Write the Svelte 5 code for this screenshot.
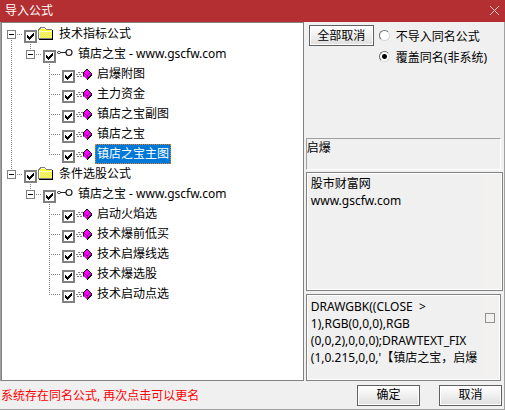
<script>
	let tree = $state([
		{
			name: '技术指标公式',
			open: true,
			checked: true,
			children: [
				{
					name: '镇店之宝 - www.gscfw.com',
					open: true,
					checked: true,
					children: [
						{ name: '启爆附图', checked: true },
						{ name: '主力资金', checked: true },
						{ name: '镇店之宝副图', checked: true },
						{ name: '镇店之宝', checked: true },
						{ name: '镇店之宝主图', checked: true }
					]
				}
			]
		},
		{
			name: '条件选股公式',
			open: true,
			checked: true,
			children: [
				{
					name: '镇店之宝 - www.gscfw.com',
					open: true,
					checked: true,
					children: [
						{ name: '启动火焰选', checked: true },
						{ name: '技术爆前低买', checked: true },
						{ name: '技术启爆线选', checked: true },
						{ name: '技术爆选股', checked: true },
						{ name: '技术启动点选', checked: true }
					]
				}
			]
		}
	]);

	let selected = $state('镇店之宝主图');
	let mode = $state('overwrite');

	const author = '股市财富网\nwww.gscfw.com';
	const source =
		"DRAWGBK((CLOSE  >\n1),RGB(0,0,0),RGB\n(0,0,2),0,0,0);DRAWTEXT_FIX\n(1,0.215,0,0,'【镇店之宝，启爆";

	function setAll(nodes, value) {
		for (const node of nodes) {
			node.checked = value;
			if (node.children) setAll(node.children, value);
		}
	}
</script>

{#snippet icon(level)}
	<svg width="16" height="16" viewBox="0 0 16 16" shape-rendering="crispEdges" aria-hidden="true">
		{#if level === 0}
			<path d="M0 13V3h1V2h1V1h5v1h1v1h6v10z" fill="#808080" />
			<path d="M1 12V4h1V3h1V2h4v1h1v1h6v8z" fill="#ffff38" />
			<path
				d="M2 6.5h12M1 7.5h12M2 8.5h12M1 9.5h12M2 10.5h12M1 11.5h12"
				stroke="#e4e48c"
				stroke-dasharray="1 1"
			/>
			<path d="M3 2.5h4M1.5 4v8M2 5.5h12" stroke="#ffffc8" />
			<path d="M14.5 4v10M1 13.5h14" stroke="#000" />
		{:else if level === 1}
			<g shape-rendering="auto">
				<path d="M3 6.5h7" stroke="#202020" />
				<rect x="0.5" y="5.5" width="3" height="2" rx="1" fill="#fff" stroke="#202020" />
				<circle cx="12" cy="6.5" r="3" fill="#fff" stroke="#202020" stroke-width="1.2" />
			</g>
		{:else}
			<path d="M2 6.5h5M0 8.5h6M1 10.5h7" stroke="#808080" stroke-dasharray="2 1" />
			<path
				d="M10 3h2v1h1v1h1v1h1v1h1v3h-1v1h-1v1h-1v1h-1v1h-1v-1h-1v-1H9v-1H8v-1H7V6h1V5h1V4h1z"
				fill="#000"
			/>
			<path
				d="M10 4h2v1h1v1h1v1h1v2h-1v1h-1v1h-1v1h-1v1h-1v-1H9v-1H8V6h1V5h1z"
				fill="#f0f"
			/>
			<path d="M8 7.5h1M9 8.5h1M10 9.5h2M12 8.5h1M13 7.5h1M11.5 10v3" stroke="#900090" />
		{/if}
	</svg>
{/snippet}

{#snippet branch(nodes, level)}
	<ul>
		{#each nodes as node}
			<li class:root={level === 0}>
				<div class="row">
					<span class="stub">
						{#if node.children}
							<button
								type="button"
								class="expander"
								aria-label={node.name}
								aria-expanded={node.open}
								onclick={() => (node.open = !node.open)}
							>
								<svg width="7" height="7" viewBox="0 0 7 7" shape-rendering="crispEdges">
									<path d={node.open ? 'M1 3.5h5' : 'M1 3.5h5M3.5 1v5'} stroke="#000" />
								</svg>
							</button>
						{/if}
					</span>
					<input type="checkbox" aria-label={node.name} bind:checked={node.checked} />
					<button
						type="button"
						class="item"
						class:selected={selected === node.name}
						onclick={() => (selected = node.name)}
					>
						{@render icon(level)}
						<span class="name">{node.name}</span>
					</button>
				</div>
				{#if node.children && node.open}
					{@render branch(node.children, level + 1)}
				{/if}
			</li>
		{/each}
	</ul>
{/snippet}

<div class="dialog">
	<header>
		<h1>导入公式</h1>
		<button type="button" class="close" aria-label="关闭">
			<svg width="11" height="11" viewBox="0 0 11 11">
				<path d="M1 1l9 9M10 1l-9 9" stroke="#f0c8c8" fill="none" />
			</svg>
		</button>
	</header>

	<main>
		<div class="tree">
			{@render branch(tree, 0)}
		</div>

		<div class="side">
			<div class="options">
				<button type="button" class="btn" onclick={() => setAll(tree, false)}>全部取消</button>
				<div class="radios">
					<label><input type="radio" name="mode" value="skip" bind:group={mode} />不导入同名公式</label>
					<label>
						<input type="radio" name="mode" value="overwrite" bind:group={mode} />覆盖同名(非系统)
					</label>
				</div>
			</div>
			<div class="desc">启爆</div>
			<textarea class="author" readonly aria-label="作者" value={author}></textarea>
			<div class="source">
				<textarea readonly aria-label="公式源码" value={source}></textarea>
				<div class="track"><span class="thumb"></span></div>
			</div>
		</div>
	</main>

	<footer>
		<p>系统存在同名公式, 再次点击可以更名</p>
		<button type="button" class="btn">确定</button>
		<button type="button" class="btn">取消</button>
	</footer>
</div>

<style>
	:global(body) {
		margin: 0;
	}

	.dialog,
	.dialog button,
	.dialog textarea {
		font-family: 'Noto Sans', 'Noto Sans CJK SC', sans-serif;
		font-size: 12px;
		color: #000;
	}

	.dialog {
		display: flex;
		flex-direction: column;
		min-height: 100vh;
		box-sizing: border-box;
		background: #f0f0f0;
		border-bottom: 1px solid #a0a0a0;
	}

	header {
		display: flex;
		justify-content: space-between;
		align-items: center;
		height: 22px;
		padding: 0 5px;
		background: #b42f32;
	}

	h1 {
		margin: 0;
		font-size: 12px;
		font-weight: 400;
		line-height: 20px;
		color: #fff;
	}

	.close {
		display: flex;
		padding: 0 0 2px;
		border: none;
		background: none;
	}

	main {
		flex: 1;
		display: flex;
		border-left: 1px solid #a0a0a0;
		border-right: 1px solid #a0a0a0;
	}

	.tree {
		flex: 3;
		box-sizing: border-box;
		padding: 1px 0 0 5px;
		background: #fff;
		border: 1px solid #828282;
	}

	ul {
		list-style: none;
		margin: 0;
		padding: 0;
	}

	ul ul {
		padding-left: 19px;
	}

	li {
		background: repeating-linear-gradient(#808080 0 1px, transparent 1px 2px) 4px 0 / 1px 100% no-repeat;
	}

	li:last-child {
		background-size: 1px 11px;
	}

	li.root:first-child {
		background-position: 4px 10px;
	}

	.row {
		display: flex;
		align-items: center;
		height: 20px;
	}

	.stub {
		display: flex;
		align-items: center;
		width: 17px;
		height: 20px;
		background: repeating-linear-gradient(90deg, #808080 0 1px, transparent 1px 2px) 4px 10px / 11px 1px
			no-repeat;
	}

	.expander {
		display: flex;
		padding: 0;
		border: 1px solid #808080;
		background: #fff;
	}

	input {
		appearance: none;
		margin: 0;
		background: #fff;
	}

	input[type='checkbox'] {
		align-self: flex-end;
		width: 13px;
		height: 13px;
		margin-bottom: 1px;
		border: 2px solid #808080;
	}

	input[type='checkbox']:checked {
		background: #fff
			url("data:image/svg+xml,%3Csvg xmlns='http://www.w3.org/2000/svg' viewBox='0 0 9 9' shape-rendering='crispEdges'%3E%3Cpath d='M1 3h1v1h1v1h1V4h1V3h1V2h1V1h1v3H7v1H6v1H5v1H4v1H3V7H2V6H1z'/%3E%3C/svg%3E");
	}

	.item {
		display: flex;
		align-items: center;
		gap: 3px;
		padding: 0 0 0 1px;
		border: none;
		background: none;
		white-space: nowrap;
	}

	.name {
		height: 18px;
		padding: 0 1px;
		border: 1px solid transparent;
		line-height: 17px;
	}

	.selected .name {
		background: #0078d7;
		border: 1px dotted #e08030;
		color: #fff;
	}

	.side {
		flex: 2;
		display: flex;
		flex-direction: column;
		box-sizing: border-box;
		min-width: 0;
		padding: 3px 1px 0 2px;
	}

	.options {
		flex: 1;
		display: flex;
		align-items: flex-start;
		gap: 5px;
		padding-left: 3px;
	}

	.btn {
		width: 63px;
		height: 21px;
		padding: 0;
		border: 1px solid #606060;
		background: linear-gradient(#fff, #ececec 60%, #dedede);
		box-shadow: inset 0 0 0 1px #fff;
		line-height: 18px;
	}

	.options .btn {
		width: 65px;
	}

	.radios {
		display: flex;
		flex-direction: column;
	}

	label {
		display: flex;
		align-items: center;
		gap: 6px;
		height: 21px;
		white-space: nowrap;
	}

	input[type='radio'] {
		width: 11px;
		height: 11px;
		border: 1px solid;
		border-color: #707070 #d8d8d8 #d8d8d8 #707070;
		border-radius: 50%;
	}

	input[type='radio']:checked {
		background: radial-gradient(circle, #000 0 2px, #fff 3px);
	}

	.desc {
		box-sizing: border-box;
		height: 32px;
		margin-right: 2px;
		border: 1px solid;
		border-color: #a0a0a0 #fff #fff #a0a0a0;
		line-height: 17px;
	}

	textarea {
		box-sizing: border-box;
		padding: 2px 4px;
		border: none;
		outline: none;
		resize: none;
		overflow: hidden;
		background: #f0f0f0;
		line-height: 17px;
		white-space: pre;
	}

	.author,
	.source {
		border: 1px solid #828282;
		box-shadow: inset 0 0 0 1px #fff;
	}

	.author {
		height: 119px;
		margin-top: 2px;
		background: linear-gradient(#f2f1f0, #f2f1f0) right / 18px 100% no-repeat #f0f0f0;
	}

	.source {
		display: flex;
		box-sizing: border-box;
		height: 87px;
		margin: 3px 2px 0 0;
		padding: 1px;
	}

	.source textarea {
		flex: 1;
		min-width: 0;
		padding: 2px 0 2px 3px;
	}

	.track {
		width: 16px;
		background: #f2f1f0;
	}

	.thumb {
		display: block;
		width: 8px;
		height: 8px;
		margin: 17px 0 0 2px;
		border: 1px solid #909090;
	}

	footer {
		display: flex;
		align-items: center;
		gap: 19px;
		height: 28px;
		padding: 0 2px 0 1px;
		border-right: 1px solid #a0a0a0;
	}

	footer p {
		flex: 1;
		margin: 0;
		color: #f00;
	}
</style>
